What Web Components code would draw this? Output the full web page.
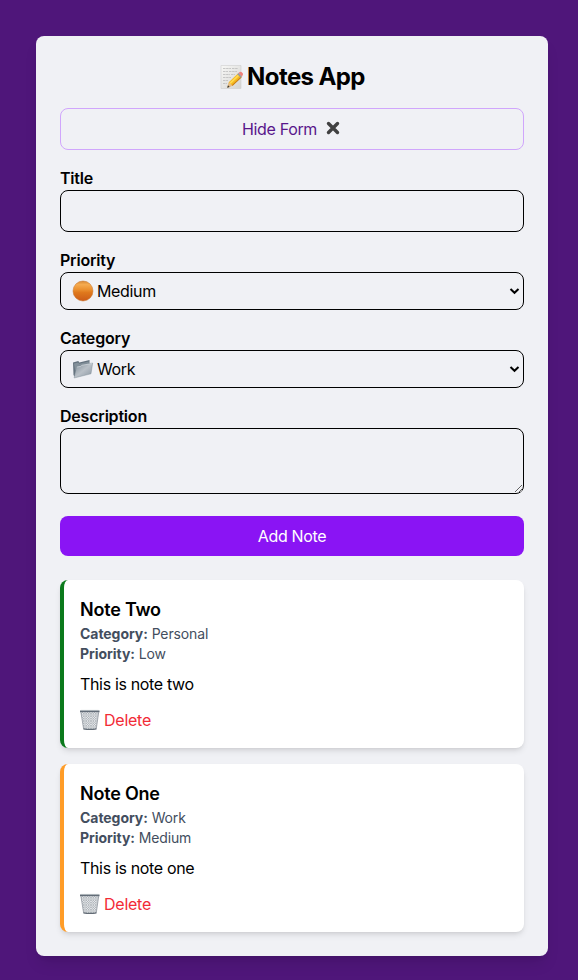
<!DOCTYPE html>
<html lang="en">
<head>
<meta charset="utf-8">
<title>Notes App</title>
<style>
body{margin:0;min-height:980px;background:#4f167a;font-family:Inter,"Liberation Sans",sans-serif;font-size:16px;line-height:24px;color:#000;box-sizing:border-box;padding:36px 30px 24px 36px}
</style>
</head>
<body>
<notes-app></notes-app>
<script>
const icons = {
memo:`<svg viewBox="0 0 24 26" width="24" height="26"><defs><linearGradient id="p" x2="1" y2="1"><stop stop-color="#f8f8f6"/><stop offset="1" stop-color="#d4d4d2"/></linearGradient></defs><path d="M2 1.5H22V24.5H2Z" fill="url(#p)" stroke="#cfcfcf" stroke-width=".6"/><path d="M4 4.5h8m1 0h6M4 7.5h5m1 0h8M4 10.5h7m1 0h4M4 13.5h8M4 16.5h5M4 19.5h4" stroke="#bbb" stroke-width=".8" stroke-dasharray="2.5 .6"/><path d="M8.5 23.5 10 18 19 9.5l3.5 3.6-9 8.5Z" fill="#f5b820"/><path d="m10.5 18.8 9-8.5 1.2 1.2-9.2 8.5Z" fill="#ffda51"/><path d="m12.8 21.2 9-8.5.8.8-9.1 8.4Z" fill="#ca7d15"/><path d="m8.2 23.8 1.6-5.6 3.8 3.5Z" fill="#e7bd86"/><path d="m8.2 23.8.8-2.5 1.7 1.6Z" fill="#333"/><path d="m18.3 10.2 1.2-1.1 3.5 3.6-1.2 1.1Z" fill="#92999e"/><path d="m19.5 9.1 1.3-1.2q1-.7 2 .4l.9 1q.8 1-.1 1.9L23 12.7Z" fill="#ee817c"/></svg>`,
cross:`<svg viewBox="0 0 16 16" width="16" height="16"><path d="m3.5 3.5 9 9m0-9-9 9" fill="none" stroke="#414141" stroke-width="3.4" stroke-linecap="round"/></svg>`,
ball:`<svg viewBox="0 0 22 22" width="22" height="22"><defs><linearGradient id="b" x2="0" y2="1"><stop stop-color="#d88936"/><stop offset=".18" stop-color="#f5ab50"/><stop offset=".42" stop-color="#eb9131"/><stop offset=".58" stop-color="#df781c"/><stop offset="1" stop-color="#cc5b18"/></linearGradient></defs><circle cx="11" cy="11" r="10" fill="url(#b)" stroke="#c77024" stroke-width=".5"/></svg>`,
folder:`<svg viewBox="0 0 22 22" width="22" height="22"><defs><linearGradient id="f" x2="1" y2="1"><stop stop-color="#7d8b96"/><stop offset=".5" stop-color="#b9c0c7"/><stop offset="1" stop-color="#88949f"/></linearGradient></defs><path d="M1 4.4 6.3 3l1 1.4L17.5 2v5L2.5 18.5 1.5 17Z" fill="#64727e"/><path d="m2 5.5 4.2-1.1 1 1.3L16.8 3.4v4L3 12Z" fill="#83909a"/><path d="m4.5 8.6 4-.8 1-1L20.7 5 19 15.8 2.1 20Z" fill="url(#f)" stroke="#778591" stroke-width=".4"/><path d="m4.8 9.1 4-.8 1-1 10.2-1.7" fill="none" stroke="#dce1e5" stroke-width=".6"/></svg>`,
trash:`<svg viewBox="0 0 22 22" width="22" height="22"><defs><pattern id="m" width="2.4" height="2.4" patternUnits="userSpaceOnUse"><path d="M0 0l2.4 2.4M2.4 0 0 2.4" stroke="#8e969d" stroke-width=".5"/></pattern></defs><path d="M1.8 2.5h18L17.2 20.3q-6.2 1-12.5 0Z" fill="#eceef0"/><path d="M1.8 2.5h18L17.2 20.3q-6.2 1-12.5 0Z" fill="url(#m)"/><path d="m1.8 2.5 2.9 17.8M19.8 2.5l-2.6 17.8" stroke="#858d95" stroke-width=".7"/><path d="M4.6 19.8q6.3 1.2 12.7 0" fill="none" stroke="#626b75" stroke-width="1.2"/><path d="M1 1.5h19.5v1.7H1Z" fill="#626c77"/><path d="M2 1.4h17.5" stroke="#a8afb6" stroke-width=".6"/></svg>`
};
function define(name, html){
  const t=document.createElement('template'); t.innerHTML=html;
  customElements.define(name,class extends HTMLElement{
    connectedCallback(){ if(this.shadowRoot)return; this.attachShadow({mode:'open'}).append(t.content.cloneNode(true)); }
  });
}
customElements.define('emoji-icon',class extends HTMLElement{
  connectedCallback(){ if(this.shadowRoot)return; this.attachShadow({mode:'open'}).innerHTML=`<style>:host{display:inline-flex;flex:none}svg{display:block}</style>${icons[this.getAttribute('name')]}`; }
});
define('toggle-button',`<style>:host{display:block}button{display:flex;width:100%;height:42px;justify-content:center;align-items:center;gap:8px;font:inherit;letter-spacing:inherit;color:#59168b;background:none;border:1px solid #d0a6fc;border-radius:8px;padding:0 1px 0 0}emoji-icon{margin-top:-3px}</style><button><span><slot></slot></span><emoji-icon name="cross"></emoji-icon></button>`);
define('form-field',`<style>:host{display:block}.label{display:block;font-weight:600;height:24px;letter-spacing:-.2px}</style><span class="label"><slot name="label"></slot></span><slot></slot>`);
define('text-input',`<style>:host{display:block}input{display:block;box-sizing:border-box;width:100%;height:42px;border:1px solid #000;border-radius:8px;background:none;padding:8px;font:inherit}</style><input aria-label="Title">`);
define('text-box',`<style>:host{display:block;padding-bottom:6px}textarea{display:block;box-sizing:border-box;width:100%;height:66px;border:1px solid #000;border-radius:8px;background:none;padding:8px;font:inherit}</style><textarea aria-label="Description"></textarea>`);
define('select-box',`<style>:host{display:flex;box-sizing:border-box;height:38px;align-items:center;border:1px solid #000;border-radius:8px;padding:0 3px 0 11px}.value{flex:1;display:flex;align-items:center;gap:3px}</style><div class="value"><slot></slot></div><svg width="11" height="8" viewBox="0 0 11 8"><path d="m1.5 2 4 3.8 4-3.8" fill="none" stroke="#000" stroke-width="2"/></svg>`);
define('submit-button',`<style>:host{display:block}button{display:block;width:100%;height:40px;border:0;border-radius:8px;background:#8a14f4;color:#fff;font:inherit;letter-spacing:inherit}</style><button><slot></slot></button>`);
define('note-card',`<style>:host{display:block;box-sizing:border-box;height:168px;padding:16px;background:#fff;border-left:4px solid var(--accent);border-radius:8px;box-shadow:0 4px 6px -1px #0000001a,0 2px 4px -2px #0000001a}h3{margin:0;font-size:18px;line-height:28px;font-weight:600;letter-spacing:-.22px}.meta{font-size:14px;line-height:20px;color:#434e5e;letter-spacing:-.14px}b{font-weight:700;letter-spacing:-.05px}p{margin:8px 0 12px}button{display:flex;align-items:center;gap:3px;border:0;padding:0;background:none;font:inherit;height:24px;color:#f22b36;letter-spacing:-.25px}emoji-icon{margin-left:-1px}</style><h3><slot name="title"></slot></h3><div class="meta"><b>Category:</b> <slot name="category"></slot></div><div class="meta"><b>Priority:</b> <slot name="priority"></slot></div><p><slot></slot></p><button><emoji-icon name="trash"></emoji-icon><span>Delete</span></button>`);
define('notes-app',`<style>:host{display:block;box-sizing:border-box;height:920px;padding:24px;background:#f0f1f5;border-radius:8px;box-shadow:0 10px 15px -3px #0000001a,0 4px 6px -4px #0000001a;letter-spacing:-.34px}
h1{display:flex;justify-content:center;align-items:center;gap:4px;margin:0 0 15px;padding-top:1px;font-size:24px;line-height:32px;font-weight:700;letter-spacing:-.6px}
.form{display:grid;gap:16px;margin-bottom:24px}.list{display:grid;gap:16px}</style>
<h1><emoji-icon name="memo"></emoji-icon><span>Notes App</span></h1>
<div class="form"><toggle-button>Hide Form</toggle-button>
<form-field><span slot="label">Title</span><text-input></text-input></form-field>
<form-field><span slot="label">Priority</span><select-box><emoji-icon name="ball"></emoji-icon><span>Medium</span></select-box></form-field>
<form-field><span slot="label">Category</span><select-box><emoji-icon name="folder"></emoji-icon><span>Work</span></select-box></form-field>
<form-field><span slot="label">Description</span><text-box></text-box></form-field>
<submit-button>Add Note</submit-button></div>
<div class="list"><note-card style="--accent:#0b7a1c"><span slot="title">Note Two</span><span slot="category">Personal</span><span slot="priority">Low</span>This is note two</note-card>
<note-card style="--accent:#ff9c27"><span slot="title">Note One</span><span slot="category">Work</span><span slot="priority">Medium</span>This is note one</note-card></div>`);
</script>
</body>
</html>
